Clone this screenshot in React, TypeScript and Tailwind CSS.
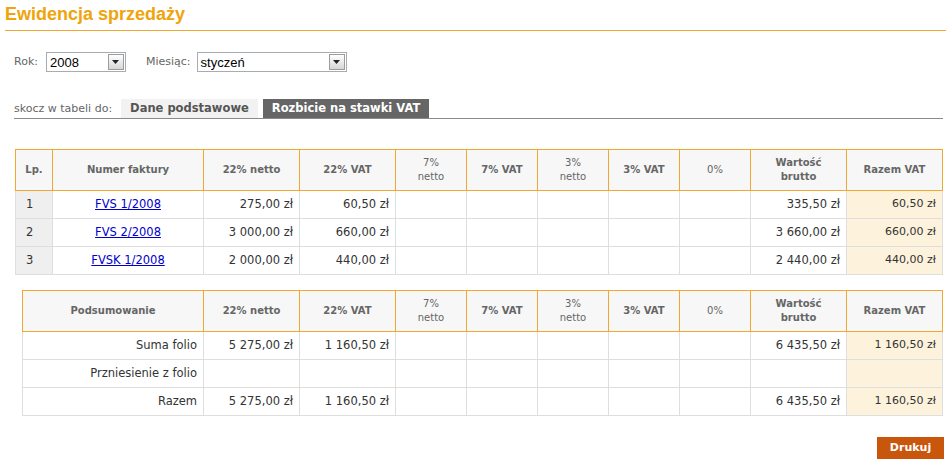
import React from 'react';

// === dane tabel ===
const rows = [
  { lp: 1, nr: "FVS 1/2008", netto22: "275,00 zł", vat22: "60,50 zł", brutto: "335,50 zł", razem: "60,50 zł" },
  { lp: 2, nr: "FVS 2/2008", netto22: "3 000,00 zł", vat22: "660,00 zł", brutto: "3 660,00 zł", razem: "660,00 zł" },
  { lp: 3, nr: "FVSK 1/2008", netto22: "2 000,00 zł", vat22: "440,00 zł", brutto: "2 440,00 zł", razem: "440,00 zł" },
];

const summary = [
  { label: "Suma folio", netto22: "5 275,00 zł", vat22: "1 160,50 zł", brutto: "6 435,50 zł", razem: "1 160,50 zł" },
  { label: "Przniesienie z folio", netto22: "", vat22: "", brutto: "", razem: "" },
  { label: "Razem", netto22: "5 275,00 zł", vat22: "1 160,50 zł", brutto: "6 435,50 zł", razem: "1 160,50 zł" },
];

const headers = [
  { lines: ["22% netto"], bold: true },
  { lines: ["22% VAT"], bold: true },
  { lines: ["7%", "netto"], bold: false },
  { lines: ["7% VAT"], bold: true },
  { lines: ["3%", "netto"], bold: false },
  { lines: ["3% VAT"], bold: true },
  { lines: ["0%"], bold: false },
  { lines: ["Wartość", "brutto"], bold: true },
  { lines: ["Razem VAT"], bold: true },
];

const th = "border border-[#f0a830] bg-[#f7f7f7] text-[10px] leading-[14px] text-[#666] text-center align-middle";
const td = "border border-[#dedede] text-[11.5px] text-[#333] px-[6px] text-right whitespace-nowrap";
const tdRazem = "border border-[#dedede] text-[11px] text-[#333] px-[6px] text-right whitespace-nowrap bg-[#fdf2dc]";

function Select({ value, width }: { value: string; width: string }) {
  return (
    <div className={`flex items-center h-[20px] border border-[#a5acb2] bg-white ${width}`}>
      <span className="flex-1 pl-[3px] text-[13px] leading-none text-black font-['Liberation_Sans',sans-serif]">{value}</span>
      <div className="w-[16px] h-[16px] mr-[1px] border border-[#9c9c9c] bg-gradient-to-b from-white to-[#d6d6d6] flex items-center justify-center">
        <svg width="7" height="4" viewBox="0 0 7 4"><polygon points="0,0 7,0 3.5,4" fill="#222" /></svg>
      </div>
    </div>
  );
}

function HeaderCells() {
  return (
    <>
      {headers.map((h) => (
        <th key={h.lines.join()} className={`${th} ${h.bold ? "font-bold" : "font-normal"}`}>
          {h.lines.map((l) => (
            <div key={l}>{l}</div>
          ))}
        </th>
      ))}
    </>
  );
}

function RateCols() {
  return (
    <>
      <col className="w-[96px]" />
      <col className="w-[96px]" />
      <col className="w-[71px]" />
      <col className="w-[71px]" />
      <col className="w-[71px]" />
      <col className="w-[71px]" />
      <col className="w-[71px]" />
      <col className="w-[96px]" />
      <col className="w-[96px]" />
    </>
  );
}

export default function App() {
  return (
    <div className="w-[951px] h-[466px] bg-white font-['DejaVu_Sans',sans-serif] overflow-hidden">
      {/* tytuł */}
      <div className="mx-[5px] h-[31px] border-b border-[#f0a830] pt-[3px]">
        <h1 className="text-[18px] leading-[22px] font-bold text-[#f0a30a] font-['Liberation_Sans',sans-serif]">Ewidencja sprzedaży</h1>
      </div>

      {/* filtry */}
      <div className="mt-[21px] mx-[14px] flex items-center h-[20px]">
        <span className="text-[11px] text-[#666] mr-[8px]">Rok:</span>
        <Select value="2008" width="w-[80px]" />
        <span className="text-[11px] text-[#666] ml-[20px] mr-[6px]">Miesiąc:</span>
        <Select value="styczeń" width="w-[150px]" />
      </div>

      {/* zakładki */}
      <div className="mt-[27px] mr-[8px] ml-[14px] h-[20px] flex items-end border-b border-[#8a8a8a]">
        <span className="text-[11px] text-[#666] leading-[19px] mr-[9px]">skocz w tabeli do:</span>
        <div className="h-[19px] px-[9px] bg-[#f2f2f2] text-[11.5px] font-bold text-[#555] leading-[19px]">Dane podstawowe</div>
        <div className="h-[19px] ml-[5px] px-[9px] bg-[#666] text-[11.5px] font-bold text-white leading-[19px]">Rozbicie na stawki VAT</div>
      </div>

      {/* tabela faktur */}
      <table className="mt-[30px] ml-[15px] w-[927px] table-fixed border-collapse">
        <colgroup>
          <col className="w-[37px]" />
          <col className="w-[151px]" />
          <RateCols />
        </colgroup>
        <thead>
          <tr className="h-[41px]">
            <th className={`${th} font-bold`}>Lp.</th>
            <th className={`${th} font-bold`}>Numer faktury</th>
            <HeaderCells />
          </tr>
        </thead>
        <tbody>
          {rows.map((r) => (
            <tr key={r.lp} className="h-[28px]">
              <td className={`${td} !text-left px-[10px] bg-[#efefef]`}>{r.lp}</td>
              <td className={`${td} !text-center`}>
                <a href="#" className="text-[#0000cc] underline">{r.nr}</a>
              </td>
              <td className={td}>{r.netto22}</td>
              <td className={td}>{r.vat22}</td>
              <td className={td}></td>
              <td className={td}></td>
              <td className={td}></td>
              <td className={td}></td>
              <td className={td}></td>
              <td className={td}>{r.brutto}</td>
              <td className={tdRazem}>{r.razem}</td>
            </tr>
          ))}
        </tbody>
      </table>

      {/* podsumowanie */}
      <table className="mt-[15px] ml-[22px] w-[920px] table-fixed border-collapse">
        <colgroup>
          <col className="w-[181px]" />
          <RateCols />
        </colgroup>
        <thead>
          <tr className="h-[41px]">
            <th className={`${th} font-bold`}>Podsumowanie</th>
            <HeaderCells />
          </tr>
        </thead>
        <tbody>
          {summary.map((s) => (
            <tr key={s.label} className="h-[28px]">
              <td className={td}>{s.label}</td>
              <td className={td}>{s.netto22}</td>
              <td className={td}>{s.vat22}</td>
              <td className={td}></td>
              <td className={td}></td>
              <td className={td}></td>
              <td className={td}></td>
              <td className={td}></td>
              <td className={td}>{s.brutto}</td>
              <td className={tdRazem}>{s.razem}</td>
            </tr>
          ))}
        </tbody>
      </table>

      <div className="mt-[21px] flex justify-end pr-[7px]">
        <button className="w-[67px] h-[22px] bg-[#c8560c] text-white text-[11px] font-bold">Drukuj</button>
      </div>
    </div>
  );
}
